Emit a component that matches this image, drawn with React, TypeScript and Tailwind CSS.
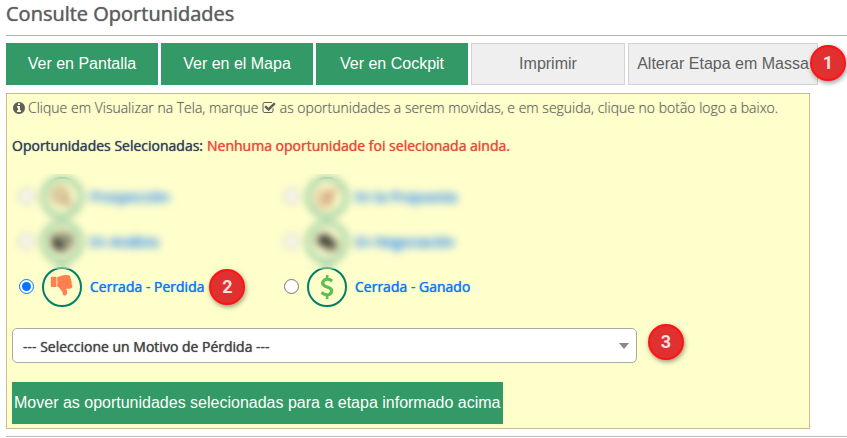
import { ReactNode, useState } from 'react';
import { FaComments, FaCube, FaEdit, FaSearch } from 'react-icons/fa';

const PATHS = {
  info: 'M1152 1376v-160q0-14-9-23t-23-9h-96v-512q0-14-9-23t-23-9h-320q-14 0-23 9t-9 23v160q0 14 9 23t23 9h96v320h-96q-14 0-23 9t-9 23v160q0 14 9 23t23 9h448q14 0 23-9t9-23zm-128-896v-160q0-14-9-23t-23-9h-192q-14 0-23 9t-9 23v160q0 14 9 23t23 9h192q14 0 23-9t9-23zm640 416q0 209-103 385.5t-279.5 279.5-385.5 103-385.5-103-279.5-279.5-103-385.5 103-385.5 279.5-279.5 385.5-103 385.5 103 279.5 279.5 103 385.5z',
  check:
    'M1472 930v318q0 119-84.5 203.5t-203.5 84.5h-832q-119 0-203.5-84.5t-84.5-203.5v-832q0-119 84.5-203.5t203.5-84.5h832q63 0 117 25 15 7 18 23 3 17-9 29l-49 49q-10 10-23 10-3 0-9-2-23-6-45-6h-832q-66 0-113 47t-47 113v832q0 66 47 113t113 47h832q66 0 113-47t47-113v-254q0-13 9-22l64-64q10-10 23-10 6 0 12 3 20 8 20 29zm231-489l-814 814q-24 24-57 24t-57-24l-430-430q-24-24-24-57t24-57l110-110q24-24 57-24t57 24l263 263 647-647q24-24 57-24t57 24l110 110q24 24 24 57t-24 57z',
  thumbsDown:
    'M320 320q0-26-19-45t-45-19q-27 0-45.5 19t-18.5 45q0 27 18.5 45.5t45.5 18.5q26 0 45-18.5t19-45.5zm160 512v-640q0-26-19-45t-45-19h-288q-26 0-45 19t-19 45v640q0 26 19 45t45 19h288q26 0 45-19t19-45zm1129-149q55 61 55 149-1 78-57.5 135t-134.5 57h-277q4 14 8 24t11 22 10 18q18 37 27 57t19 58.5 10 76.5q0 24-.5 39t-5 45-12 50-24 45-40 40.5-60 26-82.5 10.5q-26 0-45-19-20-20-34-50t-19.5-52-12.5-61q-9-42-13.5-60.5t-17.5-48.5-31-48q-33-33-101-120-49-64-101-121t-76-59q-25-2-43-20.5t-18-43.5v-641q0-26 19-44.5t45-19.5q35-1 158-44 77-26 120.5-39.5t121.5-29 144-15.5h129q133 2 197 78 58 69 49 181 39 37 54 94 17 61 0 117 46 61 43 137 0 32-15 76z',
  dollar:
    'M1362 1185q0 153-99.5 263.5t-258.5 136.5v175q0 14-9 23t-23 9h-135q-13 0-22.5-9.5t-9.5-22.5v-175q-66-9-127.5-31t-101.5-44.5-74-48-46.5-37.5-17.5-18q-17-21-2-41l103-135q7-10 23-12 15-2 24 9l2 2q113 99 243 125 37 8 74 8 81 0 142.5-43t61.5-122q0-28-15-53t-33.5-42-58.5-37.5-66-32-80-32.5q-39-16-61.5-25t-61.5-26.5-62.5-31-56.5-35.5-53.5-42.5-43.5-49-35.5-58-21-66.5-8.5-78q0-138 98-242t255-134v-180q0-13 9.5-22.5t22.5-9.5h135q14 0 23 9t9 23v176q57 6 110.5 23t87 33.5 63.5 37.5 39 29 15 14q17 18 5 38l-81 146q-8 15-23 16-14 3-27-7-3-3-14.5-12t-39-26.5-58.5-32-74.5-26-85.5-11.5q-95 0-155 43t-60 111q0 26 8.5 48t29.5 41.5 39.5 33 56 31 60.5 27 70 27.5q53 20 81 31.5t76 35 75.5 42.5 62 50 53 63.5 31.5 76.5 13 94z',
};

function Glyph({ name, className }: { name: keyof typeof PATHS; className: string }) {
  return (
    <svg viewBox="0 0 1792 1792" fill="currentColor" className={className} aria-hidden="true">
      <path d={PATHS[name]} />
    </svg>
  );
}

function Badge({ children }: { children: ReactNode }) {
  return (
    <span className="flex size-9 shrink-0 items-center justify-center rounded-full border-2 border-[#ff1414] bg-[#e03030] font-['Roboto',sans-serif] text-lg font-bold text-[#ffdede] shadow-[1px_2px_5px_rgba(0,0,0,0.4)]">
      {children}
    </span>
  );
}

const green = 'bg-[#339966] text-white';
const grey = 'border border-[#d3d3d3] bg-[#efefef] text-[#5f5f5f]';
const strong = '[text-shadow:0_0_1px_currentColor]';

const actions = [
  { label: 'Ver en Pantalla', style: green },
  { label: 'Ver en el Mapa', style: green },
  { label: 'Ver en Cockpit', style: green },
  { label: 'Imprimir', style: grey },
];

const stages = [
  { id: 'prospeccion', label: 'Prospección', icon: <FaSearch className="size-5 text-[#a07050]" /> },
  { id: 'propuesta', label: 'En la Propuesta', icon: <FaEdit className="size-5 text-[#c08060]" /> },
  { id: 'analisis', label: 'En Análisis', icon: <FaCube className="size-5 text-[#222222]" /> },
  { id: 'negociacion', label: 'En Negociación', icon: <FaComments className="size-5 text-[#222222]" /> },
  { id: 'perdida', label: 'Cerrada - Perdida', icon: <Glyph name="thumbsDown" className="size-6 text-[#ff7f50]" />, badge: 2 },
  { id: 'ganado', label: 'Cerrada - Ganado', icon: <Glyph name="dollar" className="size-6 text-[#5cbf50]" /> },
];

export default function App() {
  const [stage, setStage] = useState('perdida');

  return (
    <main className="bg-white pl-1.5 font-['Open_Sans',sans-serif] text-sm text-[#5f5f5f]">
      <h1 className={`h-9 border-b border-[#b5b5a8] text-xl leading-7 font-medium ${strong}`}>Consulte Oportunidades</h1>

      <div className="mt-[7px] mr-[29px] flex gap-[3px] font-['Liberation_Sans',Arial,sans-serif] text-base">
        {actions.map(a => (
          <button key={a.label} type="button" className={`h-[42px] flex-1 ${a.style}`}>
            {a.label}
          </button>
        ))}
        <div className="relative w-[190px] shrink-0">
          <button type="button" className={`h-[42px] w-full ${grey}`}>
            Alterar Etapa em Massa
          </button>
          <div className="absolute top-0.5 -right-7">
            <Badge>1</Badge>
          </div>
        </div>
      </div>

      <section className="mt-2 mr-[37px] border border-[#cdb98c] bg-[#ffffcc] px-[5px] pb-1">
        <p className="leading-7 font-light [text-shadow:0_0_1px_#5f5f5f80]">
          <Glyph name="info" className="mr-0.5 inline size-3.5 align-[-2px]" />
          Clique em Visualizar na Tela, marque <Glyph name="check" className="inline size-3.5 align-[-2px]" /> as
          oportunidades a serem movidas, e em seguida, clique no botão logo a baixo.
        </p>
        <p className={`mt-3 flex gap-1 leading-6 text-[#34405a] ${strong}`}>
          <span>Oportunidades Selecionadas:</span>
          <span className={`text-[#e74c3c] ${strong}`}>Nenhuma oportunidade foi selecionada ainda.</span>
        </p>

        <div className="relative mt-4">
          <div className="grid grid-cols-[265px_1fr]">
            {stages.map(s => (
              <div key={s.id} className="flex h-[45px] items-center pl-[7px]">
                <input
                  id={s.id}
                  type="radio"
                  name="etapa"
                  className="mr-2 size-[15px] accent-[#0075ff]"
                  checked={stage === s.id}
                  onChange={() => setStage(s.id)}
                />
                <label htmlFor={s.id} className={`mr-[5px] flex items-center gap-2 text-[#0a75ff] ${strong}`}>
                  <span className="flex size-10 items-center justify-center rounded-full border-2 border-[#008066]">
                    {s.icon}
                  </span>
                  {s.label}
                </label>
                {s.badge && <Badge>{s.badge}</Badge>}
              </div>
            ))}
          </div>
          <div className="pointer-events-none absolute inset-x-0 top-0 bottom-10 backdrop-blur-[4px]" />
        </div>

        <div className="mt-[15px] flex items-start gap-[11px]">
          <div className="relative mt-1 w-[625px]">
            <select
              aria-label="Motivo de Pérdida"
              className={`block h-[35px] w-full appearance-none rounded-[5px] border border-[#aaaaaa] bg-white px-2.5 pt-0.5 text-[#444444] ${strong}`}
            >
              <option>--- Seleccione un Motivo de Pérdida ---</option>
            </select>
            <svg viewBox="0 0 10 6" className="pointer-events-none absolute top-[15px] right-2 h-1.5 w-2.5" aria-hidden="true">
              <path d="M0 0h10L5 6z" fill="#888888" />
            </svg>
          </div>
          <Badge>3</Badge>
        </div>

        <button type="button" className={`mt-[19px] h-[42px] px-0.5 font-['Liberation_Sans',Arial,sans-serif] text-base ${green}`}>
          Mover as oportunidades selecionadas para a etapa informado acima
        </button>
      </section>
      <hr className="mt-[7px] border-[#b9b9b9]" />
    </main>
  );
}
